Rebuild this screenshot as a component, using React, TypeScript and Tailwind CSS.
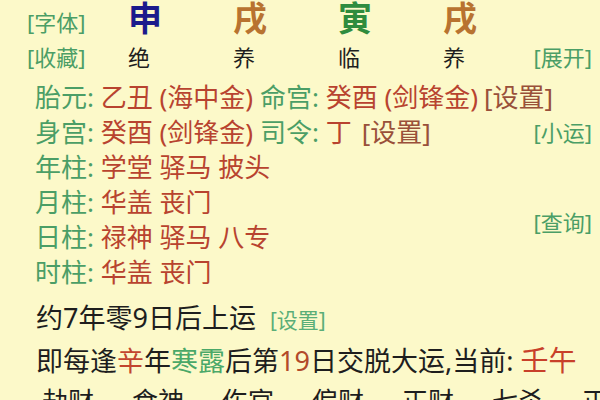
const green = "text-[#4b9e66]";
const red = "text-[#b8432f]";

function Pair({ label, value }: { label: string; value: string }) {
  return (
    <>
      <span className={green}>{label}: </span>
      <span className={red}>{value}</span>
    </>
  );
}

export default function App() {
  const pillars = [
    { ch: "申", color: "text-[#1b1b8c]", stage: "绝" },
    { ch: "戌", color: "text-[#b87330]", stage: "养" },
    { ch: "寅", color: "text-[#2f8c3e]", stage: "临" },
    { ch: "戌", color: "text-[#b87330]", stage: "养" },
  ];
  const shens = ["劫财", "食神", "伤官", "偏财", "正财", "七杀", "正印"];

  return (
    <div className="w-[600px] h-[400px] overflow-hidden bg-[#fcf9c9] font-['Noto_Sans','Noto_Sans_CJK_SC',sans-serif] text-[#1e1e1e]">
      {/* 四柱 */}
      <div className="grid grid-cols-[65.5px_105px_105px_105px_105px_1fr] pl-[27px] pr-[8px] h-[38px] items-start">
        <span className={`text-[22px] leading-[44px] ${green}`}>[字体]</span>
        {pillars.map((p, i) => (
          <span key={i} className={`text-center text-[34px] leading-[36px] font-bold ${p.color}`}>
            {p.ch}
          </span>
        ))}
        <span />
      </div>
      <div className="grid grid-cols-[65.5px_105px_105px_105px_105px_1fr] pl-[27px] pr-[8px] h-[38px] items-center">
        <span className={`text-[22px] leading-[38px] ${green}`}>[收藏]</span>
        {pillars.map((p, i) => (
          <span key={i} className="text-center pr-3 text-[22px] leading-[38px]">
            {p.stage}
          </span>
        ))}
        <span className={`text-right text-[22px] leading-[38px] ${green}`}>[展开]</span>
      </div>

      {/* 神煞 */}
      <div className="mt-[4px] pl-[35px] pr-[8px] text-[26px] leading-[35px] whitespace-nowrap">
        <div>
          <Pair label="胎元" value="乙丑 (海中金)" /> <Pair label="命宫" value="癸酉 (剑锋金)" />
          <span className="ml-[6px] text-[#99503a]">[设置]</span>
        </div>
        <div className="flex justify-between">
          <div>
            <Pair label="身宫" value="癸酉 (剑锋金)" /> <Pair label="司令" value="丁" />
            <span className="ml-[10px] text-[#99503a]">[设置]</span>
          </div>
          <span className={`text-[22px] ${green}`}>[小运]</span>
        </div>
        <div className="flex justify-between">
          <div>
            <div><Pair label="年柱" value="学堂 驿马 披头" /></div>
            <div><Pair label="月柱" value="华盖 丧门" /></div>
            <div><Pair label="日柱" value="禄神 驿马 八专" /></div>
            <div><Pair label="时柱" value="华盖 丧门" /></div>
          </div>
          <div className="pt-[54px]">
            <span className={`text-[22px] ${green}`}>[查询]</span>
          </div>
        </div>
      </div>

      {/* 大运 */}
      <div className="mt-[8px] pl-[36px] text-[27px] leading-[40px] whitespace-nowrap">
        <div>
          约7年零9日后上运
          <span className="ml-[14px] text-[21px] text-[#5aae78]">[设置]</span>
        </div>
        <div>
          即每逢<span className="text-[#c2452e]">辛</span>年
          <span className="text-[#4aa868]">寒露</span>后第
          <span className="text-[#b24a2a]">19</span>日交脱大运,当前:{" "}
          <span className="text-[28px] text-[#c8402a]">壬午</span>
        </div>
        <div className="flex gap-[38px] pl-[6px] text-[26px]">
          {shens.map((s, i) => (
            <span key={i}>{s}</span>
          ))}
        </div>
      </div>
    </div>
  );
}
